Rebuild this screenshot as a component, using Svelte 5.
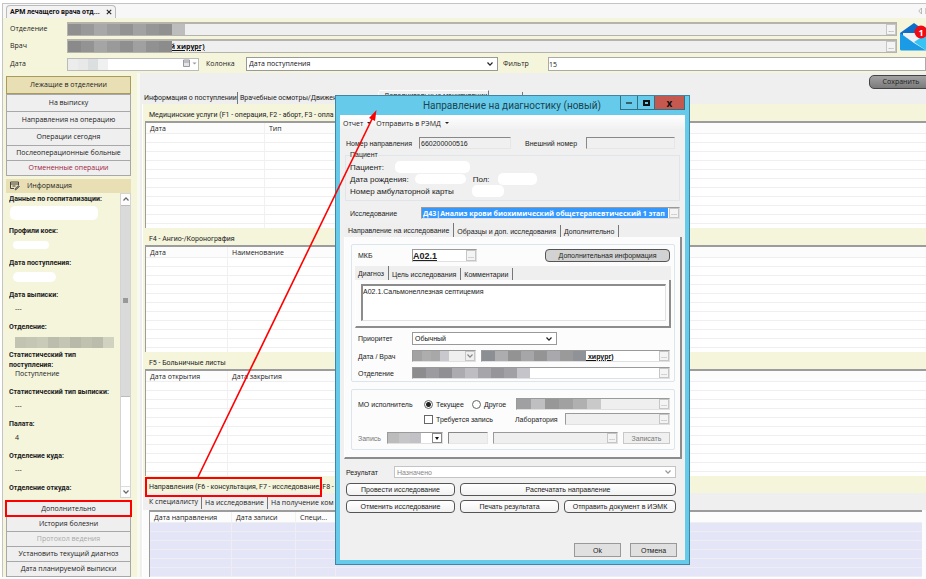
<!--
  Ward physician workplace: patient lists on the left, service grids in the
  middle, and the "new diagnostic referral" window floating above them.
-->
<script lang="ts">
  type Column = { title: string; width?: number };
  type Item = {
    title: string;
    value?: string;
    kind?: "wide" | "small" | "mid" | "mosaic" | "tall";
  };

  const lists = [
    "Лежащие в отделении",
    "На выписку",
    "Направления на операцию",
    "Операции сегодня",
    "Послеоперационные больные",
    "Отмененные операции"
  ];

  const actions = [
    "Дополнительно",
    "История болезни",
    "Протокол ведения",
    "Установить текущий диагноз",
    "Дата планируемой выписки"
  ];

  const info: Item[] = [
    { title: "Данные по госпитализации:", kind: "wide" },
    { title: "Профили коек:", kind: "small" },
    { title: "Дата поступления:", kind: "mid" },
    { title: "Дата выписки:", value: "---" },
    { title: "Отделение:", kind: "mosaic" },
    { title: "Статистический тип поступления:", value: "Поступление", kind: "tall" },
    { title: "Статистический тип выписки:", value: "---" },
    { title: "Палата:", value: "4" },
    { title: "Отделение куда:", value: "---" },
    { title: "Отделение откуда:" }
  ];

  const grids: { caption: string; columns: Column[] }[] = [
    {
      caption: "Медицинские услуги (F1 - операция, F2 - аборт, F3 - опла",
      columns: [{ title: "Дата", width: 119 }, { title: "Тип" }]
    },
    {
      caption: "F4 - Ангио-/Коронография",
      columns: [{ title: "Дата", width: 82 }, { title: "Наименование" }]
    },
    {
      caption: "F5 - Больничные листы",
      columns: [{ title: "Дата открытия", width: 82 }, { title: "Дата закрытия" }]
    }
  ];

  const referralColumns: Column[] = [
    { title: "Дата направления", width: 82 },
    { title: "Дата записи", width: 64 },
    { title: "Специ...", width: 40 },
    { title: "" }
  ];

  let activeList = $state(0);
  let column = $state("Дата поступления");
  let filter = $state("15");
  let number = $state("660200000516");
  let study = $state("Д43|Анализ крови биохимический общетерапевтический 1 этап");
  let diagnosis = $state("A02.1.Сальмонеллезная септицемия");
  let performer = $state("current");
</script>

{#snippet mosaic(tones: string[], step: number)}
  <span class="mosaic">
    {#each tones as tone}
      <i style="width: {step}px; background: {tone}"></i>
    {/each}
  </span>
{/snippet}

{#snippet chevron()}
  <svg class="chevron" viewBox="0 0 8 6" aria-hidden="true">
    <path d="M1.5 1.5 4 4.2 6.5 1.5" fill="none" stroke="currentColor" stroke-width="1.2" />
  </svg>
{/snippet}

{#snippet more(label: string)}
  <button class="more" type="button" aria-label={label}>...</button>
{/snippet}

{#snippet grid(columns: Column[], rows: number)}
  <table>
    <thead>
      <tr>
        {#each columns as col}
          <th style={col.width ? `width: ${col.width}px` : undefined}>{col.title}</th>
        {/each}
      </tr>
    </thead>
    <tbody>
      {#each { length: rows } as _}
        <tr>
          {#each columns as _col}<td></td>{/each}
        </tr>
      {/each}
    </tbody>
  </table>
{/snippet}

<div class="app">
  <div class="doc-tabs">
    <div class="doc-tab">
      <span>АРМ лечащего врача отд...</span>
      <button type="button" aria-label="Закрыть">
        <svg viewBox="0 0 6 6"><path d="M.8.8 5.2 5.2M5.2.8.8 5.2" stroke="#222" stroke-width="1.1" /></svg>
      </button>
    </div>
    <svg class="scroller" viewBox="0 0 8 8" aria-hidden="true">
      <path d="M3.5 1v6L.8 4z" fill="none" stroke="#aaa" stroke-width=".8" />
      <path d="M7.5 1v6" stroke="#ccc" />
    </svg>
  </div>

  <header>
    <div class="top">
      <div class="top-fields">
        <div class="row">
          <label for="dept">Отделение</label>
          <div class="lookup grey">
            {@render mosaic(["#8f8f8f", "#999", "#a8a8a8", "#9d9d9d", "#929292", "#a2a2a2", "#969696", "#909090", "#bdbdbd"], 13)}
            <input id="dept" readonly />
            {@render more("Выбрать отделение")}
          </div>
        </div>
        <div class="row">
          <label for="doctor">Врач</label>
          <div class="lookup grey">
            {@render mosaic(["#8a8a8a", "#939393", "#a5a5a5", "#9a9a9a", "#8f8f8f", "#a0a0a0", "#919191", "#8c8c8c"], 13)}
            <input id="doctor" class="strong cut" value="й хирург)" readonly />
            {@render more("Выбрать врача")}
          </div>
        </div>
      </div>
      <svg class="mail" viewBox="0 0 28 28" role="img" aria-label="Сообщения: 1">
        <path d="M0 10 14 0l14 10v4H0z" fill="#0f6fc8" />
        <path d="M3 10h22v8l-11 5L3 15z" fill="#f1f1f4" />
        <path d="M0 10v16q0 1.500 1.500 1.500H26.500L14 20z" fill="#1b9be6" />
        <path d="M28 10v16q0 1.500-1.500 1.500L14 19z" fill="#35c4f5" />
        <circle cx="21" cy="9" r="6.500" fill="#f00a14" />
        <text x="21" y="12.500" text-anchor="middle">1</text>
      </svg>
    </div>
    <div class="row filters">
      <label for="date">Дата</label>
      <div class="lookup date">
        {@render mosaic(["#ececec", "#e8e8e8", "#dcdfe0", "#f0f0f0"], 10)}
        <input id="date" />
        <svg class="calendar" viewBox="0 0 16 9" aria-hidden="true">
          <path d="M1.500 1h6v6.500h-6z" fill="#e3e3ec" stroke="#999" />
          <path d="M2 3h5" stroke="#999" />
          <path d="M10.500 3.500h4l-2 2z" fill="#999" />
        </svg>
      </div>
      <label class="mid" for="column">Колонка</label>
      <div class="combo">
        <select id="column" bind:value={column}>
          <option>Дата поступления</option>
        </select>
        {@render chevron()}
      </div>
      <label class="mid narrow" for="filter">Фильтр</label>
      <input id="filter" class="filter" bind:value={filter} />
    </div>
  </header>

  <div class="body">
    <aside>
      <nav class="stack">
        {#each lists as name, i}
          <button
            type="button"
            class:active={i === activeList}
            class:short={i > 3}
            class:alert={i === 5}
            onclick={() => (activeList = i)}>{name}</button
          >
        {/each}
      </nav>

      <h2>
        <svg viewBox="0 0 10 10" aria-hidden="true">
          <path d="M8.500 4V1h-8v6.500H4M.5 3h8M2.500 5h3" fill="none" stroke="#444" />
          <path d="m5 9 .5-1.800L8.500 4.500l1 1-3 3z" fill="#777" stroke="#444" stroke-width=".6" />
        </svg>
        Информация
      </h2>

      <div class="info">
        <dl>
          {#each info as item}
            <div class="item {item.kind ?? ''}">
              <dt>{item.title}</dt>
              <dd>
                {#if item.kind === "mosaic"}
                  {@render mosaic(["#c3c3b2", "#c6c6b5", "#cacab9", "#bdbdae", "#c5c5b4", "#b9b9aa", "#c1c1b0", "#bcbcac", "#d2d2c0"], 11)}
                {:else if item.value}
                  {item.value}
                {:else if item.kind}
                  <span class="blank"></span>
                {/if}
              </dd>
            </div>
          {/each}
        </dl>
        <div class="scrollbar" aria-hidden="true">
          <span class="arrow up">{@render chevron()}</span>
          <span class="thumb"><i></i></span>
          <span class="arrow down">{@render chevron()}</span>
        </div>
      </div>

      <div class="stack bottom">
        {#each actions as name, i}
          <button type="button" class:marked={i === 0} disabled={i === 2}>{name}</button>
        {/each}
      </div>
    </aside>

    <main>
      <div class="toolbar">
        <button type="button" class="save">Сохранить</button>
      </div>
      <div class="tabs page-tabs">
        <button type="button">Информация о поступлении</button>
        <button type="button" class="moves">Врачебные осмотры/Движен</button>
        <button type="button" class="on">Дополнительные манипуляции</button>
        <button type="button" class="last">Выписка</button>
      </div>
      <div class="page">
        {#each grids as g}
          <h3>{g.caption}</h3>
          <div class="grid">{@render grid(g.columns, 11)}</div>
        {/each}
        <h3>Направления (F6 - консультация, F7 - исследование, F8 -</h3>
        <div class="referrals">
          <div class="tabs">
            <button type="button" class="on">К специалисту</button>
            <button type="button">На исследование</button>
            <button type="button">На получение ком</button>
          </div>
          <div class="grid tinted">{@render grid(referralColumns, 7)}</div>
        </div>
      </div>
    </main>
  </div>

  <section class="window" role="dialog" aria-labelledby="win-title">
    <div class="titlebar">
      <h1 id="win-title">Направление на диагностику (новый)</h1>
      <div class="controls">
        <button type="button" aria-label="Свернуть"><i class="min"></i></button>
        <button type="button" aria-label="Развернуть"><i class="max"></i></button>
        <button type="button" class="close" aria-label="Закрыть окно">x</button>
      </div>
    </div>

    <form class="sheet" onsubmit={(e) => e.preventDefault()}>
      <div class="menu">
        <button type="button">Отчет <i></i></button>
        <button type="button">Отправить в РЭМД <i></i></button>
      </div>

      <div class="line numbers">
        <label for="num">Номер направления</label>
        <input id="num" class="sunk" bind:value={number} readonly />
        <label for="ext">Внешний номер</label>
        <input id="ext" class="sunk" readonly />
      </div>

      <fieldset class="patient">
        <legend>Пациент</legend>
        <p>Пациент: <span class="blank name"></span></p>
        <p>
          Дата рождения: <span class="blank birth"></span>
          <span class="sex">Пол:</span> <span class="blank gender"></span>
        </p>
        <p>Номер амбулаторной карты <span class="blank card"></span></p>
      </fieldset>

      <div class="line study">
        <label for="study">Исследование</label>
        <div class="lookup">
          <input id="study" class="selected" bind:value={study} />
          {@render more("Выбрать исследование")}
        </div>
      </div>

      <div class="tabs sheet-tabs">
        <button type="button" class="on">Направление на исследование</button>
        <button type="button">Образцы и доп. исследования</button>
        <button type="button">Дополнительно</button>
      </div>
      <div class="panel">
        <div class="group">
          <div class="line icd">
            <label for="icd">МКБ</label>
            <div class="lookup">
              <input id="icd" class="code" value="A02.1" />
              {@render more("Выбрать диагноз")}
            </div>
            <button type="button" class="pill filled">Дополнительная информация</button>
          </div>
          <div class="tabs">
            <button type="button" class="on">Диагноз</button>
            <button type="button">Цель исследования</button>
            <button type="button">Комментарии</button>
          </div>
          <div class="panel inner">
            <textarea aria-label="Диагноз" bind:value={diagnosis}></textarea>
          </div>
          <div class="line priority">
            <label for="priority">Приоритет</label>
            <div class="combo">
              <select id="priority"><option>Обычный</option></select>
              {@render chevron()}
            </div>
          </div>
          <div class="line when">
            <label for="who">Дата / Врач</label>
            <div class="lookup grey">
              {@render mosaic(["#a2a2a2", "#adadad", "#a8a8a8", "#c8c8ce"], 9)}
              <input aria-label="Дата" readonly />
              <span class="drop">{@render chevron()}</span>
            </div>
            <div class="lookup">
              {@render mosaic(["#8b8f94", "#adadb0", "#939393", "#a6a6a8", "#949494", "#a9a9ad", "#9a9a9a", "#8f9297"], 13)}
              <input id="who" class="strong" value=" хирург)" />
              {@render more("Выбрать врача направления")}
            </div>
          </div>
          <div class="line where">
            <label for="where">Отделение</label>
            <div class="lookup">
              {@render mosaic(["#8c8c8f", "#9c9ca0", "#8f8f94", "#ababb0", "#bdbdc2", "#a5a5aa", "#95959a", "#a0a0a5", "#c4c4ca"], 13)}
              <input id="where" />
              {@render more("Выбрать отделение направления")}
            </div>
          </div>
        </div>

        <div class="group second">
          <div class="line performer">
            <span>МО исполнитель</span>
            <label><input type="radio" value="current" bind:group={performer} />Текущее</label>
            <label><input type="radio" value="other" bind:group={performer} />Другое</label>
            <div class="lookup grey">
              {@render mosaic(["#a0a0a3", "#bfbfc2", "#979797", "#a1a1a1", "#b0b0b0", "#c9c9c9"], 14)}
              <input aria-label="Организация" readonly />
              {@render more("Выбрать организацию")}
            </div>
          </div>
          <div class="line lab">
            <span></span>
            <label><input type="checkbox" />Требуется запись</label>
            <label for="lab">Лаборатория</label>
            <div class="lookup grey">
              <input id="lab" readonly />
              {@render more("Выбрать лабораторию")}
            </div>
          </div>
          <div class="line booking">
            <label for="slot">Запись</label>
            <div class="lookup">
              {@render mosaic(["#bcbcbc", "#c6c6c9", "#c2c2c6"], 11)}
              <input id="slot" />
              <span class="drop solid"><i></i></span>
            </div>
            <input class="sunk" aria-label="Время" readonly />
            <div class="lookup grey">
              <input aria-label="Кабинет" readonly />
              {@render more("Выбрать кабинет")}
            </div>
            <button type="button" class="book" disabled>Записать</button>
          </div>
        </div>
      </div>

      <div class="line result">
        <label for="result">Результат</label>
        <div class="combo off">
          <select id="result" disabled><option>Назначено</option></select>
          {@render chevron()}
        </div>
      </div>
      <div class="line buttons">
        <button type="button" class="pill">Провести исследование</button>
        <button type="button" class="pill rest">Распечатать направление</button>
      </div>
      <div class="line buttons">
        <button type="button" class="pill">Отменить исследование</button>
        <button type="button" class="pill print">Печать результата</button>
        <button type="button" class="pill rest">Отправить документ в ИЭМК</button>
      </div>
      <div class="footer">
        <button type="submit">Ok</button>
        <button type="button">Отмена</button>
      </div>
    </form>
  </section>

  <!-- red callout: the referral caption leads to the opened window -->
  <svg class="callout" width="400" height="510" aria-hidden="true">
    <rect x="146" y="478" width="175" height="18" fill="none" stroke="#f00" stroke-width="2" />
    <path d="M198 477 373 117" stroke="#f00" stroke-width="1.600" />
    <path d="m376.500 110-7.500 8 6 3z" fill="#f00" />
  </svg>
</div>

<style>
  :global(body) {
    margin: 0;
    background: #fff;
    overflow: hidden;
  }

  .app {
    --cream: #f5f5dc;
    --face: #efefef;
    --edge: #9a9a9a;
    --narrow: Roboto, "Open Sans", sans-serif;
    display: flex;
    flex-direction: column;
    box-sizing: border-box;
    height: calc(100vh - 5px);
    margin: 3px 0 2px 2px;
    border-top: 1px solid #c4c4c4;
    border-left: 1px solid #c4c4c4;
    overflow: hidden;
    color: #222;
    font: 7px/10px "Open Sans", "Noto Sans", sans-serif;
  }
  .app :is(div, aside, label, button, input, select, textarea, fieldset, span) { box-sizing: border-box; }
  button, input, select, textarea {
    min-width: 0;
    margin: 0;
    padding: 0;
    border: 0;
    border-radius: 0;
    background: none;
    color: inherit;
    font: inherit;
    white-space: nowrap;
  }
  input:focus-visible, select:focus-visible { outline: none; }
  h1, h2, h3, p, dl, dd { margin: 0; font-weight: 400; }

  /* document tabs */
  .doc-tabs {
    display: flex;
    align-items: flex-end;
    flex: none;
    height: 14px;
    padding: 0 0 0 3px;
    background: #f7f7f7;
  }
  .doc-tab {
    display: flex;
    align-items: center;
    justify-content: space-between;
    width: 110px;
    height: 13px;
    padding: 0 3px;
    border: 1px solid #bbb;
    border-bottom: 0;
    border-radius: 4px 4px 0 0;
    background: #f3f3f3;
    color: #111;
    font-family: var(--narrow);
    font-weight: 700;
    white-space: nowrap;
  }
  .doc-tab button { display: flex; width: 6px; }
  .doc-tab svg { width: 6px; height: 6px; }
  .scroller { width: 8px; height: 8px; margin: 0 0 3px auto; }

  /* header */
  header {
    flex: none;
    padding: 4px 0 2px 7px;
    background: var(--cream);
  }
  .top { display: flex; gap: 3px; }
  .top-fields { flex: 1; display: grid; gap: 3px; }
  .row { display: flex; align-items: center; }
  .row > label { width: 57px; }
  .row > .lookup { flex: 1; height: 14px; border: 1px solid #b4b4ac; border-top-width: 2px; }
  .mail { flex: none; width: 28px; height: 28px; margin: 1px -2px 0 0; }
  .mail text { fill: #fff; font: 700 9px "Open Sans", sans-serif; }
  .filters { margin-top: 4px; }
  .filters > .lookup.date { flex: none; width: 132px; height: 13px; border: 1px solid #bbb; background: #fff; }
  .filters > label.mid { width: 47px; padding-left: 7px; }
  .filters > label.narrow { width: 50px; padding-left: 5px; }
  .filters .combo { flex: none; width: 252px; height: 14px; }
  .filter { flex: 1; height: 14px; border: 1px solid #aaa; background: #fff; }
  .calendar { flex: none; width: 16px; height: 9px; }

  .lookup {
    display: flex;
    align-items: stretch;
    height: 12px;
    min-width: 0;
    border: 1px solid #e0e0e0;
    border-top-color: var(--edge);
    border-left-color: var(--edge);
    background: #fff;
  }
  .lookup.grey { background: var(--face); }
  .lookup input { flex: 1; width: 0; }
  .lookup .strong {
    color: #111;
    font-weight: 700;
    text-decoration: underline;
  }
  .lookup .cut { text-indent: -2px; }
  .more {
    flex: none;
    width: 10px;
    border: 1px solid #c6c6c6;
    background: #f4f4f4;
    color: #777;
    line-height: 6px;
  }
  .mosaic { display: flex; flex: none; align-self: stretch; }
  .mosaic i { display: block; }

  .combo {
    display: flex;
    align-items: center;
    border: 1px solid #999;
    background: #fff;
    padding-right: 3px;
  }
  .combo select { flex: 1; appearance: none; padding-left: 2px; color: #111; }
  .chevron { flex: none; width: 8px; height: 6px; }

  .blank { display: block; border-radius: 5px; background: #fff; }

  /* sidebar */
  .body { flex: 1; display: flex; min-height: 0; }
  aside {
    display: flex;
    flex-direction: column;
    flex: none;
    width: 137px;
    padding: 3px 6px 0 3px;
    border-right: 3px solid #f9f9f2;
    background: var(--cream);
  }
  .stack { display: flex; flex-direction: column; border-bottom: 1px solid #a8a8a8; }
  .stack button {
    height: 17px;
    border: 1px solid #a8a8a8;
    border-bottom: 0;
    background: var(--face);
  }
  .stack .active { height: 18px; border: 1px solid #a99b5e; background: #e9dfb4; }
  .stack .short { height: 15px; }
  .stack .alert { color: #a02040; }
  .stack.bottom { flex: none; margin-top: 3px; }
  .stack.bottom button { height: 15px; }
  .stack.bottom .marked { outline: 2px solid #f00; outline-offset: -1px; z-index: 1; }
  .stack button:disabled { color: #a9a9a9; }
  h2 {
    display: flex;
    align-items: center;
    gap: 7px;
    height: 14px;
    margin-top: 3px;
    padding-left: 4px;
    background: #e9dfb4;
    font-size: 7px;
  }
  h2 svg { width: 10px; height: 10px; }
  .info { display: flex; height: 306px; overflow: hidden; }
  dl { flex: 1; padding: 1px 0 0 3px; }
  .item { height: 32px; overflow: hidden; }
  dt { color: #222; font-family: var(--narrow); font-weight: 700; white-space: nowrap; }
  dd { padding: 4px 0 0 6px; line-height: 9px; }
  .wide dd { padding: 2px 0 0 1px; }
  .wide .blank { width: 88px; height: 14px; }
  .small dd { padding: 5px 0 0 4px; }
  .small .blank { width: 36px; height: 8px; }
  .mid dd { padding: 4px 0 0 4px; }
  .mid .blank { width: 43px; height: 10px; }
  .item.mosaic { display: block; height: 28px; }
  .item.mosaic dd { padding-top: 5px; }
  .item.mosaic .mosaic { height: 11px; }
  .item.tall { height: 37px; }
  .tall dt { width: 80px; white-space: normal; }
  .tall dd { padding-top: 0; line-height: 8px; }
  .scrollbar { display: flex; flex-direction: column; width: 11px; border: 1px solid #d4d4d4; background: #fff; }
  .arrow { display: grid; place-items: center; height: 11px; background: #fcfcfc; color: #666; }
  .up .chevron { transform: rotate(180deg); }
  .down { margin-top: auto; border-top: 1px solid #ddd; }
  .thumb { display: grid; place-items: center; height: 192px; border-top: 1px solid #bbb; border-bottom: 1px solid #bbb; background: #dadada; }
  .thumb i { width: 5px; height: 5px; background: #999; }

  /* work area */
  main { flex: 1; min-width: 0; padding-left: 2px; background: var(--face); overflow: hidden; }
  .toolbar { display: flex; justify-content: flex-end; height: 17px; padding-top: 2px; }
  .save {
    width: 64px;
    height: 14px;
    margin-right: -7px;
    border: 1px solid #444;
    border-radius: 5px;
    background: linear-gradient(#a2a2a2, #7b7b7b);
    color: #222;
  }
  .tabs { display: flex; align-items: flex-end; height: 14px; background: var(--face); }
  .tabs button {
    height: 12px;
    padding: 0 3px;
    border-right: 1px solid #777;
  }
  .tabs button.on { height: 14px; padding-bottom: 1px; }
  .page-tabs { font-family: var(--narrow); }
  .page-tabs button { flex: none; width: 96px; padding: 0 2px; text-align: left; overflow: hidden; }
  .page-tabs .moves { width: 141px; border-right-color: #fff; }
  .page-tabs button.on { width: 110px; padding: 0 0 3px 5px; border-top: 1px solid #fff; }
  .page-tabs .last { width: 34px; }
  .page { padding-left: 2px; border-left: 1px solid #fff; background: var(--cream); }
  h3 {
    box-sizing: border-box;
    height: 17px;
    padding: 6px 0 0 4px;
    font: 7px/10px var(--narrow);
    white-space: nowrap;
    overflow: hidden;
  }
  .grid { height: 107px; border-top: 2px solid #9c9c9c; border-left: 1px solid #9c9c9c; background: #fff; overflow: hidden; }
  table { width: 100%; table-layout: fixed; border-collapse: separate; border-spacing: 0; }
  th, td { box-sizing: border-box; height: 9px; padding: 0; border-bottom: 1px solid #efefef; border-right: 1px solid #f1f1f1; }
  th { height: 11px; padding-left: 4px; background: #fcfcfc; color: #222; font-weight: 400; line-height: 9px; text-align: left; }
  th:last-child, td:last-child { border-right: 0; }
  .referrals { margin-left: -2px; background: #fcfcfc; padding: 0 4px 0 0; }
  .referrals .tabs { height: 17px; margin-right: -4px; padding: 0 0 1px 3px; }
  .referrals .grid { height: 80px; margin-left: 6px; }
  .tinted td { border-color: #ededf3; background: #e5e5f8; }

  /* referral window */
  .window {
    position: absolute;
    top: 95px;
    left: 335px;
    width: 355px;
    box-sizing: border-box;
    padding: 0 4px 4px;
    border: 1px solid #3f86a3;
    background: #66cbea;
    color: #222;
    font: 7px/9px "Liberation Sans", Arial, sans-serif;
  }
  .titlebar { display: flex; height: 19px; }
  h1 {
    flex: 1;
    padding-left: 64px;
    color: #1d4450;
    font: 10px/19px var(--narrow);
    text-align: center;
    white-space: nowrap;
  }
  .controls { display: flex; height: 14px; border: 1px solid #33707f; border-top: 0; }
  .controls button { display: grid; place-items: center; width: 17px; border-right: 1px solid #33707f; }
  .controls .close { width: 29px; border-right: 0; background: #c5584f; color: #111; font: 700 10px/10px "Open Sans", sans-serif; }
  .min { width: 6px; height: 2px; background: #35606c; }
  .max { box-sizing: border-box; width: 7px; height: 6px; border: 2px solid #111; }
  .sheet { padding-bottom: 3px; background: #f0f0f0; }
  .menu { display: flex; gap: 5px; height: 16px; padding-left: 3px; background: linear-gradient(#fff, #efefef); font-family: "Open Sans", sans-serif; }
  .menu button { display: flex; align-items: center; gap: 4px; }
  .menu i { border: 2px solid transparent; border-top-color: #222; border-bottom: 0; }

  .line { display: flex; align-items: center; }
  .line > label, .line > span { flex: none; white-space: nowrap; }
  .sunk { height: 12px; padding-left: 1px; border: 1px solid #e6e6e6; border-top-color: #888; border-left-color: #888; }
  .numbers { margin-top: 6px; padding: 0 10px 0 6px; }
  .numbers label:first-child { width: 73px; }
  .numbers label + input { width: 92px; }
  .numbers input + label { width: 61px; margin-left: 14px; }
  .numbers input:last-child { flex: 1; }

  .patient { margin: 2px 5px 0; padding: 2px 4px 3px; border: 1px solid #dfe5e9; }
  legend { padding: 0; line-height: 8px; }
  .patient p { display: flex; align-items: center; height: 12px; font-size: 8px; white-space: nowrap; }
  .name { width: 75px; height: 12px; margin-left: 11px; }
  .birth { width: 51px; height: 10px; margin-left: 6px; }
  .sex { margin-left: 7px; }
  .gender { width: 39px; height: 12px; margin-left: 8px; }
  .card { flex: none; width: 32px; height: 12px; margin-left: 18px; }

  .study { margin-top: 6px; padding: 0 5px 0 10px; }
  .study label { width: 71px; }
  .study .lookup { flex: 1; }
  .lookup .selected {
    margin-right: 1px;
    padding-left: 1px;
    background: #3399ff;
    color: #fff;
    font-family: "Open Sans", sans-serif;
    font-weight: 700;
  }

  .sheet-tabs { margin: 4px 3px 0 5px; }
  .window .tabs button { padding: 0 4px 0 3px; }
  .panel {
    margin: 0 3px 0 4px;
    padding: 7px 5px 7px 6px;
    border: 1px solid #fff;
    border-top: 0;
    border-right: 2px solid #8c8c8c;
    border-bottom: 2px solid #8c8c8c;
    background: #fcfcfc;
  }
  .group { padding: 4px 3px 2px; border: 1px solid #dbe5ec; border-radius: 2px; }
  .group .line { padding: 0 1px 0 3px; }
  .group .lookup, .group .sunk { flex: 1; }
  .icd label, .priority label, .when label, .where label { width: 54px; }
  .group .icd .lookup { flex: none; width: 65px; height: 13px; }
  .lookup .code { font: 700 9px/10px "Liberation Sans", sans-serif; text-decoration: underline; }
  .pill {
    width: 109px;
    height: 13px;
    border: 1px solid #555;
    border-radius: 4px;
    background: linear-gradient(#fff, #f2f2f2);
  }
  .pill.filled { width: 125px; margin-left: auto; background: #d2d2d2; }
  .group .tabs { margin-top: 4px; }
  .panel.inner { margin: 0; height: 48px; padding: 4px 3px 5px 5px; }
  textarea {
    display: block;
    width: 100%;
    height: 37px;
    padding: 1px 0;
    border: 1px solid #e2e2e2;
    border-top: 2px solid #8c8c8c;
    border-left: 2px solid #8c8c8c;
    background: #fff;
    resize: none;
  }
  .priority { margin-top: 4px; }
  .priority .combo { width: 145px; height: 13px; }
  .when, .where { margin-top: 5px; }
  .group .when label + .lookup { flex: none; width: 64px; margin-right: 5px; }
  .drop { display: grid; place-items: center; width: 10px; border: 1px solid #c6c6c6; color: #888; }
  .drop i { border: 2px solid transparent; border-top: 3px solid #111; border-bottom: 0; }
  .drop.solid { border-color: #888; }

  .second { margin-top: 7px; padding: 8px 3px 5px; }
  .performer > span, .lab > span { width: 66px; }
  .performer label, .lab label:first-of-type { display: flex; align-items: center; gap: 3px; width: 48px; }
  .performer label + label { width: 44px; }
  .lab { margin-top: 3px; }
  .lab label:first-of-type { width: 91px; }
  .lab label + label { width: 50px; }
  input[type="radio"], input[type="checkbox"] {
    appearance: none;
    width: 9px;
    height: 9px;
    border: 1px solid #666;
    background: #fff;
  }
  input[type="radio"] { border-radius: 50%; }
  input[type="radio"]:checked { background: radial-gradient(#222 0 2px, #fff 3px); }
  input[type="checkbox"]:checked { background: #333; }
  .booking { margin-top: 7px; gap: 5px; color: #777; }
  .booking label { width: 24px; }
  .group .booking label + .lookup { flex: none; width: 56px; }
  .group .booking .sunk { flex: none; width: 40px; background: var(--face); }
  .book { flex: none; width: 47px; height: 12px; border: 1px solid #c8c8c8; background: #f0f0f0; }

  .result { margin-top: 7px; padding: 0 9px 0 6px; }
  .result label { width: 48px; }
  .result .combo { flex: 1; height: 12px; }
  .combo.off { border-color: #c4c4c4; color: #999; }
  .combo.off select { color: #888; opacity: 1; }
  .buttons { gap: 5px; margin-top: 5px; padding: 0 9px 0 6px; }
  .buttons + .buttons { margin-top: 4px; }
  .print { width: 99px; }
  .rest { flex: 1; }
  .footer { display: flex; justify-content: flex-end; gap: 9px; margin-top: 30px; padding-right: 8px; }
  .footer button { width: 47px; height: 14px; border: 1px solid #999; background: #e0e0e0; }

  .callout { position: absolute; top: 0; left: 0; pointer-events: none; }
</style>
